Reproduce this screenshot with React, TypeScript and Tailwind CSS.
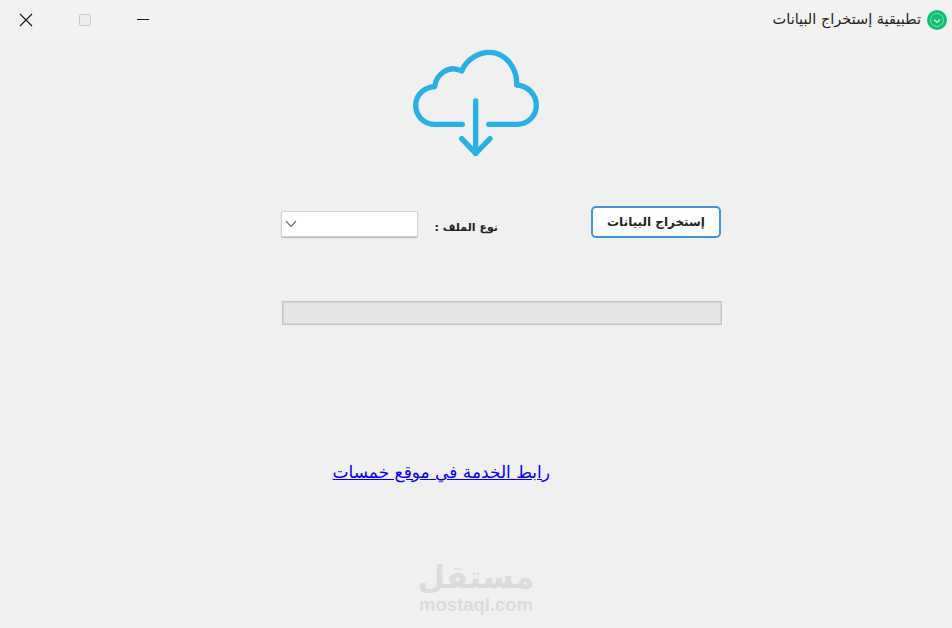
const arabic = "font-['DejaVu_Sans','Noto_Sans',sans-serif]";

function CloudIcon() {
  return (
    <svg viewBox="0 0 450 375" className="w-[150px] h-[125px]" fill="none" stroke="#29b1e6" strokeWidth="16" strokeLinecap="round" strokeLinejoin="round">
      <path d="M187 253H105C70 253 47 226 47 196C47 165 72 142 104 140C108 105 145 72 185 93C200 58 235 37 268 37C315 37 352 82 350 135C385 138 409 165 409 196C409 228 384 253 350 253H266" />
      <path d="M227 183V340" />
      <path d="M185 296L227 340L270 296" />
    </svg>
  );
}

function AppBadge() {
  return (
    <svg viewBox="0 0 20 20" className="w-5 h-5">
      <circle cx="10" cy="10" r="10" fill="#0dbf6f" />
      <circle cx="10" cy="10" r="6.5" fill="none" stroke="#7fe0b0" strokeWidth="1" />
      <path d="M7 9.5L10 12.5L13 9.5" fill="none" stroke="#d8f7e6" strokeWidth="1.2" />
    </svg>
  );
}

function TitleBar() {
  return (
    <div className="h-[39px] bg-[#f3f2f3] flex items-center justify-between pl-[19px] pr-[5px]">
      <div className="flex items-center">
        <svg viewBox="0 0 14 14" className="w-[14px] h-[14px]" fill="none" stroke="#1a1a1a" strokeWidth="1.1">
          <path d="M1 1L13 13M13 1L1 13" />
        </svg>
        <div className="ml-[46px] w-[12px] h-[12px] rounded-[2px] border border-[#c9c9c9] bg-[#ececec]" />
        <div className="ml-[46px] w-[12px] h-px bg-[#1a1a1a]" />
      </div>
      <div className="flex items-center gap-[6px]">
        <span dir="rtl" className={`${arabic} text-[14.5px] text-[#222]`}>تطبيقية إستخراج البيانات</span>
        <AppBadge />
      </div>
    </div>
  );
}

export default function App() {
  return (
    <div className="w-[952px] h-[628px] bg-[#f0f0f0] overflow-hidden flex flex-col">
      <TitleBar />
      <div className="flex justify-center pt-px pr-[2px]">
        <CloudIcon />
      </div>

      <div className="flex items-center h-[32px] mt-[41px] pl-[281px]">
        <div className="w-[137px] h-[26px] mt-[3px] bg-white border border-[#d0d0d0] rounded-[2px] shadow-[0_1px_1px_#bbb] flex items-center pl-[3px]">
          <svg viewBox="0 0 12 8" className="w-[12px] h-[8px]" fill="none" stroke="#777" strokeWidth="1.2">
            <path d="M1 1L6 6.5L11 1" />
          </svg>
        </div>
        <div dir="rtl" className={`${arabic} w-[61px] ml-[19px] mt-[13px] text-[11px] font-bold text-[#222] whitespace-nowrap`}>نوع الملف :</div>
        <button dir="rtl" className={`${arabic} w-[130px] h-[32px] ml-[93px] bg-white border-2 border-[#3d93dc] rounded-[5px] text-[12px] font-bold text-[#222]`}>
          إستخراج البيانات
        </button>
      </div>

      <div className="w-[440px] h-[24px] mt-[63px] ml-[282px] bg-[#e6e6e6] border border-[#c4c4c4] shadow-[inset_0_0_0_1px_#d6d6d6]" />

      <div className="mt-[134px] ml-[332px] w-[218px]">
        <a href="#" dir="rtl" className={`${arabic} block text-[17px] leading-[26px] text-[#0000ff] underline whitespace-nowrap`}>رابط الخدمة في موقع خمسات</a>
      </div>

      <div className="mt-[73px] flex flex-col items-center text-[#dcdcdc] font-bold">
        <span dir="rtl" className={`${arabic} text-[32px] leading-[38px]`}>مستقل</span>
        <span className="font-['Liberation_Sans',sans-serif] text-[18.5px] leading-[18px]">mostaql.com</span>
      </div>
    </div>
  );
}
